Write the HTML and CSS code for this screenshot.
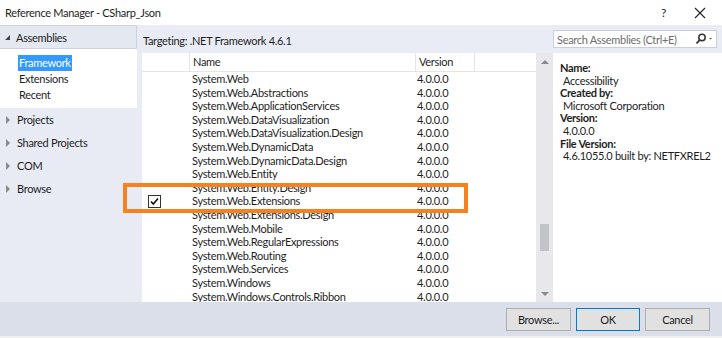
FILE: index.html
```html
<!DOCTYPE html>
<html lang="en">
  <head>
    <meta charset="UTF-8" />
    <title>Reference Manager - CSharp_Json</title>
    <link rel="stylesheet" href="styles.css">
  </head>
  <body>
    <div class="window">
      <div class="titlebar">
        <span class="title">Reference Manager - CSharp_Json</span>
        <span class="help">?</span>
        <svg class="close" width="12" height="12" viewBox="0 0 12 12">
          <path d="M1 1 L11 11 M11 1 L1 11" stroke="#222" stroke-width="1.1" fill="none" />
        </svg>
      </div>

      <div class="main">
        <div class="sidebar">
          <div class="group-head">
            <span class="tri-open"></span>
            <span>Assemblies</span>
          </div>
          <div class="group-body">
            <div class="sub selected">Framework</div>
            <div class="sub">Extensions</div>
            <div class="sub">Recent</div>
          </div>
          <div class="group"><span class="tri-closed"></span>Projects</div>
          <div class="group"><span class="tri-closed"></span>Shared Projects</div>
          <div class="group"><span class="tri-closed"></span>COM</div>
          <div class="group"><span class="tri-closed"></span>Browse</div>
        </div>

        <div class="content">
          <div class="targeting">Targeting: .NET Framework 4.6.1</div>
          <div class="search">
            <span class="placeholder">Search Assemblies (Ctrl+E)</span>
            <svg class="search-icon" width="18" height="12" viewBox="0 0 18 12">
              <circle cx="7" cy="4.5" r="3.2" stroke="#333" stroke-width="1.5" fill="none" />
              <path d="M4.8 6.8 L1.5 10.5" stroke="#333" stroke-width="1.8" />
              <path d="M14 5 L17 5 L15.5 6.6 Z" fill="#555" />
            </svg>
          </div>

          <div class="list-wrap">
            <div class="list">
              <div class="list-head">
                <div class="col-check"></div>
                <div class="col-name">Name</div>
                <div class="col-ver">Version</div>
                <div class="col-rest"></div>
              </div>
              <div id="rows"></div>
            </div>
            <div class="scrollbar">
              <span class="arrow-up"></span>
              <div class="track"><div class="thumb"></div></div>
              <span class="arrow-down"></span>
            </div>
          </div>

          <div class="details">
            <div class="label">Name:</div>
            <div class="value">Accessibility</div>
            <div class="label">Created by:</div>
            <div class="value">Microsoft Corporation</div>
            <div class="label">Version:</div>
            <div class="value">4.0.0.0</div>
            <div class="label">File Version:</div>
            <div class="value">4.6.1055.0 built by: NETFXREL2</div>
          </div>
        </div>
      </div>

      <div class="footer">
        <button class="btn">Browse...</button>
        <button class="btn btn-default">OK</button>
        <button class="btn">Cancel</button>
      </div>

      <div class="highlight"></div>
    </div>

    <script>
      const assemblies = [
        "System.Web",
        "System.Web.Abstractions",
        "System.Web.ApplicationServices",
        "System.Web.DataVisualization",
        "System.Web.DataVisualization.Design",
        "System.Web.DynamicData",
        "System.Web.DynamicData.Design",
        "System.Web.Entity",
        "System.Web.Entity.Design",
        "System.Web.Extensions",
        "System.Web.Extensions.Design",
        "System.Web.Mobile",
        "System.Web.RegularExpressions",
        "System.Web.Routing",
        "System.Web.Services",
        "System.Windows",
        "System.Windows.Controls.Ribbon",
      ];

      const rows = document.getElementById("rows");
      assemblies.forEach((name) => {
        const row = document.createElement("div");
        row.className = "row";
        const check = document.createElement("div");
        check.className = "col-check";
        if (name === "System.Web.Extensions") {
          check.innerHTML =
            '<svg class="checkbox" width="13" height="13" viewBox="0 0 13 13">' +
            '<rect x="0.5" y="0.5" width="12" height="12" fill="white" stroke="#333" />' +
            '<path d="M3 6.5 L5.3 9 L10 3.5" stroke="#111" stroke-width="1.6" fill="none" />' +
            "</svg>";
        }
        const n = document.createElement("div");
        n.className = "col-name";
        n.textContent = name;
        const v = document.createElement("div");
        v.className = "col-ver";
        v.textContent = "4.0.0.0";
        row.append(check, n, v);
        rows.appendChild(row);
      });
    </script>
  </body>
</html>
```

FILE: styles.css
```css
body {
  margin: 0;
  padding: 0;
  font-family: Lato, "Open Sans", sans-serif;
  font-size: 11px;
  letter-spacing: -0.3px;
  color: #1e1e1e;
  overflow: hidden;
}

.window {
  position: relative;
  width: 722px;
  height: 338px;
  display: flex;
  flex-direction: column;
  background-color: #e9ecf5;
}

.titlebar {
  height: 25px;
  background-color: white;
  display: flex;
  align-items: center;
  padding-left: 5px;
}

.title {
  flex: 1;
}

.help {
  font-size: 12px;
  margin-right: 28px;
}

.close {
  margin-right: 16px;
}

.main {
  height: 277px;
  display: flex;
}

/* left navigation */
.sidebar {
  width: 137px;
  background-color: #e8ebf4;
  border-right: 1px solid #e8ebf4;
}

.group-head {
  height: 22px;
  display: flex;
  align-items: center;
  background-color: #e4e8f1;
  border-top: 1px solid #cdd2de;
  border-bottom: 1px solid #cdd2de;
  border-right: 1px solid #cdd2de;
}

.tri-open {
  width: 0;
  height: 0;
  margin: 0 6px 0 5px;
  border-left: 5px solid transparent;
  border-bottom: 5px solid #444;
}

.group-body {
  background-color: white;
  padding: 6px 0 4px 18px;
  height: 49px;
}

.sub {
  height: 16px;
  line-height: 15px;
  width: fit-content;
  padding: 0 1px;
}

.sub.selected {
  background-color: #3399ff;
  color: white;
}

.group {
  height: 23px;
  display: flex;
  align-items: center;
}

.tri-closed {
  width: 0;
  height: 0;
  margin: 0 7px 0 6px;
  border-top: 4px solid transparent;
  border-bottom: 4px solid transparent;
  border-left: 4px solid #8a8a8a;
}

/* center + details */
.content {
  flex: 1;
  display: grid;
  grid-template-columns: 415px 169px;
  grid-template-rows: 28px 1fr;
}

.targeting {
  padding: 9px 0 0 5px;
}

.search {
  margin: 5px 5px 5px 0;
  height: 16px;
  background-color: white;
  border: 1px solid #cccedb;
  display: flex;
  align-items: center;
  padding-left: 3px;
  white-space: nowrap;
}

.placeholder {
  flex: 1;
  color: #6d6d6d;
}

.search-icon {
  margin-right: 3px;
}

.list-wrap {
  display: flex;
  margin-left: 4px;
}

.list {
  flex: 1;
  background-color: white;
}

.list-head {
  display: flex;
  height: 18px;
  border-bottom: 1px solid #e5e5e5;
}

.list-head > div {
  border-right: 1px solid #e5e5e5;
  line-height: 18px;
}

.list-head .col-rest {
  flex: 1;
  border-right: none;
}

.col-check {
  width: 47px;
  flex-shrink: 0;
}

.col-name {
  width: 222px;
  padding-left: 3px;
  flex-shrink: 0;
}

.col-ver {
  width: 55px;
  padding-left: 3px;
  flex-shrink: 0;
}

.row {
  display: flex;
  height: 13.6px;
  line-height: 13.6px;
}

.checkbox {
  display: block;
  margin: 1px 0 0 6px;
}

.scrollbar {
  width: 17px;
  background-color: #e8e8ec;
  display: flex;
  flex-direction: column;
  align-items: center;
}

.arrow-up,
.arrow-down {
  width: 0;
  height: 0;
  border-left: 4px solid transparent;
  border-right: 4px solid transparent;
}

.arrow-up {
  margin-top: 7px;
  border-bottom: 4px solid #8a8a8e;
}

.arrow-down {
  margin-bottom: 7px;
  border-top: 4px solid #8a8a8e;
}

.track {
  flex: 1;
  width: 9px;
  padding-top: 160px;
}

.thumb {
  height: 27px;
  background-color: #c2c3c9;
}

.details {
  background-color: white;
  padding: 9px 0 0 7px;
  line-height: 12.6px;
  white-space: nowrap;
}

.details .label {
  font-weight: bold;
}

.details .value {
  padding-left: 3px;
}

/* bottom buttons */
.footer {
  flex: 1;
  display: flex;
  justify-content: flex-end;
  align-items: center;
  gap: 5px;
  padding-right: 12px;
  background-color: #dadfea;
  border-bottom: 2px solid #f0f0f0;
}

.btn {
  width: 65px;
  height: 23px;
  background-color: #e1e1e1;
  border: 1px solid #adadad;
  font-family: Lato, "Open Sans", sans-serif;
  font-size: 11px;
  letter-spacing: -0.3px;
  color: #1e1e1e;
  padding: 0;
}

.btn-default {
  border-color: #0078d7;
  width: 64px;
}

/* orange annotation over the list */
.highlight {
  position: absolute;
  left: 123px;
  top: 183px;
  width: 337px;
  height: 22px;
  border: 4px solid #f58220;
}
```
